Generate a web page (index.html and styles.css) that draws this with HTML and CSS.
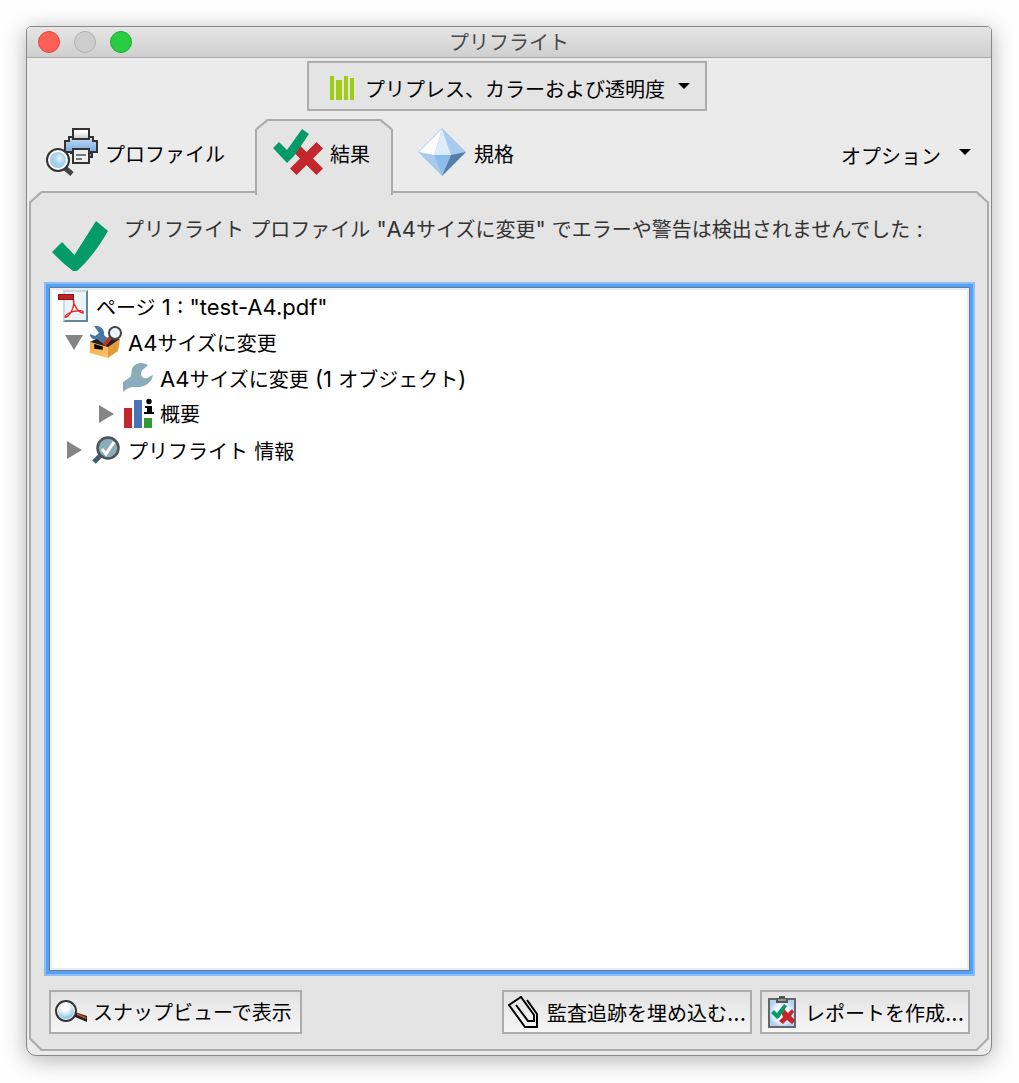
FILE: index.html
```html
<!DOCTYPE html>
<html lang="ja">
<head>
<meta charset="utf-8">
<meta name="viewport" content="width=device-width, initial-scale=1">
<title>プリフライト</title>
<link rel="stylesheet" href="styles.css">
</head>
<body>
<main class="window">
  <header class="titlebar">
    <div class="lights">
      <button class="light light-close" type="button" aria-label="閉じる"></button>
      <button class="light light-min" type="button" aria-label="しまう" disabled></button>
      <button class="light light-zoom" type="button" aria-label="拡大"></button>
    </div>
    <h1 class="title">プリフライト</h1>
  </header>

  <div class="library">
    <label class="dropdown">
      <svg class="icon" width="24" height="24" viewBox="0 0 24 24" fill="#a0cd14" aria-hidden="true"><path d="M0 0h4v24H0zM6 4h6v20H6zM14 0h4v24h-4zM20 2h4v22h-4z"/></svg>
      <select class="dropdown-select" aria-label="ライブラリ">
        <option>プリプレス、カラーおよび透明度</option>
      </select>
      <svg class="icon arrow" width="12" height="6" viewBox="0 0 12 6" aria-hidden="true"><path d="M0 0h12L6 6z"/></svg>
    </label>
  </div>

  <nav class="tabs">
    <button class="tab tab-profile" type="button">
      <svg class="icon" width="52" height="48" viewBox="0 0 52 48" aria-hidden="true">
        <defs>
          <linearGradient id="paper" x1="0" y1="0" x2="0" y2="1"><stop offset="0.3" stop-color="#fff"/><stop offset="1" stop-color="#c4c4c4"/></linearGradient>
          <linearGradient id="printer" x1="0" y1="0" x2="0" y2="1"><stop offset="0" stop-color="#c5def7"/><stop offset="1" stop-color="#74a9df"/></linearGradient>
          <radialGradient id="lens" cx="0.6" cy="0.4" r="0.6"><stop offset="0" stop-color="#eef7fc"/><stop offset="0.5" stop-color="#add7ed"/><stop offset="1" stop-color="#9accea"/></radialGradient>
        </defs>
        <path d="M24 25h22v4h-3" fill="#999" stroke="#333" stroke-width="2"/>
        <path d="M23 9h24v4h4v11H19V13h4z" fill="url(#printer)" stroke="#333" stroke-width="2"/>
        <path d="M27 1h16v10H27z" fill="url(#paper)" stroke="#333" stroke-width="2"/>
        <path d="M27 21h16v14H27z" fill="#eee" stroke="#333" stroke-width="2"/>
        <path d="M30 27h10M30 31h6" stroke="#777" stroke-width="2"/>
        <path d="M19 40l7 6" stroke="#444" stroke-width="5"/>
        <circle cx="12" cy="32" r="11" fill="#fff" stroke="#333" stroke-width="2"/>
        <circle cx="12" cy="32" r="8" fill="url(#lens)"/>
      </svg>
      <span class="tab-label">プロファイル</span>
    </button>
    <button class="tab tab-active" type="button" aria-current="page">
      <span class="tab-face">
        <svg class="icon" width="50" height="48" viewBox="0 0 50 48" aria-hidden="true">
          <path d="M23.500 14l10 10 10-10 6.500 6.500-10 10 10 10-6.500 6.500-10-10-10 10-6.500-6.500 10-10-10-10z" fill="#c1272d"/>
          <path d="M0 20l6-6 8 8L29 1l7 5-15 22q-4 4-7 7z" fill="#039b68"/>
        </svg>
        <span class="tab-label">結果</span>
      </span>
    </button>
    <button class="tab tab-standards" type="button">
      <svg class="icon" width="48" height="48" viewBox="0 0 48 48" aria-hidden="true">
        <path d="M24 0l24 24-24 24L0 24z" fill="#a9cbee"/>
        <path d="M24 1L1 24l15 3z" fill="#fff"/>
        <path d="M24 1l-8 26h17z" fill="#deecf8"/>
        <path d="M16 27h17l-9 20z" fill="#8cbce9"/>
        <path d="M48 24l-15 3-9 21z" fill="#547faa"/>
      </svg>
      <span class="tab-label">規格</span>
    </button>
    <button class="options" type="button" aria-haspopup="menu">
      <span class="tab-label">オプション</span>
      <svg class="icon arrow" width="12" height="6" viewBox="0 0 12 6" aria-hidden="true"><path d="M0 0h12L6 6z"/></svg>
    </button>
  </nav>

  <section class="panel">
    <div class="panel-body">
      <div class="status">
        <svg class="icon" width="56" height="54" viewBox="0 0 56 54" aria-hidden="true"><path d="M0 35l10-10 12.500 13L44 4l12 10q-15 26-31 40h-4q-11-8-21-19z" fill="#039b68"/></svg>
        <p class="status-text">プリフライト<span class="latin"> </span>プロファイル<span class="latin"> "A4</span>サイズに変更<span class="latin">" </span>でエラーや警告は検出されませんでした<span class="latin"> :</span></p>
      </div>

      <div class="results" tabindex="0">
        <ul class="tree">
          <li class="row">
            <svg class="icon" width="32" height="32" viewBox="0 0 32 32" aria-hidden="true">
              <path d="M5 0h25v32H5z" fill="#5f899c"/>
              <path d="M5 0h25l-2 2v28l-2 0H7l-2 2z" fill="#c3dbe6"/>
              <path d="M7 2h21v28H7z" fill="#edf4f8"/>
              <path d="M14 9c3 0 2 8-1 13-2 4-5 6-6 5 0-2 6-6 12-6 4-1 7 0 6 2-3 0-9-5-10-14" fill="none" stroke="#e8262b" stroke-width="1.300"/>
              <path d="M0 4h16v6H0z" fill="#8f1218"/><path d="M1 5h14v4H1z" fill="#bd252b"/>
            </svg>
            <span class="row-label">ページ<span class="latin"> 1 : "test-A4.pdf"</span></span>
          </li>
          <li>
            <div class="row">
              <button class="toggle" type="button" aria-expanded="true" aria-label="折りたたむ"><svg class="icon" width="18" height="15" viewBox="0 0 18 15"><path d="M0 0h18L9 15z" fill="#858585"/></svg></button>
              <svg class="icon" width="32" height="32" viewBox="0 0 32 32" aria-hidden="true">
                <defs><linearGradient id="box" x1="0" y1="0" x2="1" y2="1"><stop offset="0" stop-color="#f4ae43"/><stop offset="1" stop-color="#f8c26d"/></linearGradient></defs>
                <path d="M0 16l10-5 20 2-12 9z" fill="#26201b"/>
                <path d="M4 0c6-1 11 3 10 9l5 5-4 5-8-6c-4 1-7-1-7-5l5 2 4-3z" fill="#4878a8"/>
                <path d="M14 19l8-9" stroke="#b9382c" stroke-width="4"/>
                <path d="M0 16l18 5v11L0 27z" fill="url(#box)"/>
                <path d="M18 21l12-8-2 12-10 7z" fill="#e39a3a"/>
                <path d="M5 19l7 2v2l-7-1z" fill="#000" stroke="#000" stroke-width="1.500"/>
                <circle cx="25" cy="7" r="6" fill="#eef5fa" stroke="#444" stroke-width="2"/>
              </svg>
              <span class="row-label"><span class="latin">A4</span>サイズに変更</span>
            </div>
            <ul class="tree branch">
              <li class="row leaf">
                <svg class="icon" width="32" height="32" viewBox="0 0 32 32" aria-hidden="true"><path d="M26 3C20-1 12 1 10 7c-1 5 0 7-3 9l-6 4v10c6-5 9-5 12-5 9 1 17-4 18-12l-6 3c-3 1-6-1-6-4s2-5 4-6z" fill="#8aacbb"/></svg>
                <span class="row-label"><span class="latin">A4</span>サイズに変更<span class="latin"> (1 </span>オブジェクト<span class="latin">)</span></span>
              </li>
              <li class="row">
                <button class="toggle" type="button" aria-expanded="false" aria-label="展開"><svg class="icon" width="15" height="18" viewBox="0 0 15 18"><path d="M0 0v18l15-9z" fill="#858585"/></svg></button>
                <svg class="icon" width="32" height="32" viewBox="0 0 32 32" aria-hidden="true">
                  <path d="M2 10h8v20H2z" fill="#c1272d"/><path d="M12 2h8v28h-8z" fill="#4a72b5"/><path d="M22 20h8v10h-8z" fill="#339933"/>
                  <path d="M23 8h7v6h2v2H22v-2h3v-4h-2z"/><circle cx="27" cy="3.500" r="2.700"/>
                </svg>
                <span class="row-label">概要</span>
              </li>
            </ul>
          </li>
          <li class="row">
            <button class="toggle" type="button" aria-expanded="false" aria-label="展開"><svg class="icon" width="15" height="18" viewBox="0 0 15 18"><path d="M0 0v18l15-9z" fill="#858585"/></svg></button>
            <svg class="icon" width="32" height="32" viewBox="0 0 32 32" aria-hidden="true">
              <path d="M11 21l-7 7" stroke="#3f5d6e" stroke-width="5"/>
              <circle cx="18" cy="14" r="10.500" fill="#8aacbb" stroke="#4a5459" stroke-width="2.500"/>
              <path d="M12 15l4 5 8-12" fill="none" stroke="#fff" stroke-width="3"/>
            </svg>
            <span class="row-label">プリフライト<span class="latin"> </span>情報</span>
          </li>
        </ul>
      </div>

      <footer class="actions">
        <button class="action action-snap" type="button">
          <svg class="icon" width="32" height="32" viewBox="0 0 32 32" aria-hidden="true">
            <defs><radialGradient id="glass" cx="0.450" cy="0.300" r="0.700"><stop offset="0.300" stop-color="#fff"/><stop offset="1" stop-color="#7fc0e4"/></radialGradient></defs>
            <path d="M20 16l12 4v6l-12-5z" fill="#222"/><path d="M22 17l9 4v2l-9-4z" fill="#d2492a"/>
            <circle cx="11" cy="15" r="10" fill="#fff" stroke="#333" stroke-width="2"/><circle cx="11" cy="15" r="8" fill="url(#glass)"/>
          </svg>
          <span class="action-label">スナップビューで表示</span>
        </button>
        <button class="action action-embed" type="button">
          <svg class="icon" width="32" height="32" viewBox="0 0 32 32" aria-hidden="true"><path d="M19 4l10 14v13H17L1 9l12-8 13 18v6h-6L8 9" fill="none" stroke="#000" stroke-width="2"/></svg>
          <span class="action-label">監査追跡を埋め込む<span class="latin">...</span></span>
        </button>
        <button class="action action-report" type="button">
          <svg class="icon" width="28" height="32" viewBox="0 0 28 32" aria-hidden="true">
            <defs><radialGradient id="board"><stop offset="0.500" stop-color="#fff"/><stop offset="1" stop-color="#b4d2f5"/></radialGradient></defs>
            <path d="M1 3h26v28H1z" fill="url(#board)" stroke="#666" stroke-width="2"/>
            <path d="M13 16l3-3 4 4 4-4 2 3-3 4 3 3v3l-2 2-5-4-4 4-4-3 4-4z" fill="#c1272d"/>
            <path d="M3 17l3-3 3 3 7-9 3 2-8 12-2 1z" fill="#039b68"/>
            <path d="M8 2h3V0h6v2h3v5H8z" fill="#555"/><path d="M10 3h8v2h-8z" fill="#999"/>
          </svg>
          <span class="action-label">レポートを作成<span class="latin">...</span></span>
        </button>
      </footer>
    </div>
  </section>
</main>
</body>
</html>
```
FILE: styles.css
```css
* {
  box-sizing: border-box;
}

:root {
  --line: #acacac;
  --face: #ebebeb;
  --panel: #e4e4e4;
}

body {
  margin: 0;
  min-height: 100vh;
  display: flex;
  padding: 26px 27px 27px 26px;
  background: #fefefe;
  color: #000;
  font: 20px/24px Inter, "Noto Sans CJK JP", sans-serif;
}

button,
select {
  margin: 0;
  padding: 0;
  border: 0;
  background: none;
  color: inherit;
  font: inherit;
}

/* Latin runs are set slightly larger to balance with the kana */
.latin {
  font-size: 22px;
}

.icon {
  display: block;
  flex: none;
}

.window {
  flex: 1;
  min-width: 0;
  display: flex;
  flex-direction: column;
  border: 1px solid #888;
  border-radius: 5px 5px 10px 10px;
  background: var(--face);
  box-shadow: 0 4px 22px rgba(0, 0, 0, 0.3);
}

/* Title bar */
.titlebar {
  display: grid;
  grid-template-columns: 1fr auto 1fr;
  align-items: center;
  height: 31px;
  padding: 0 11px;
  border-bottom: 1px solid #a8a8a8;
  border-radius: 4px 4px 0 0;
  background: linear-gradient(#e5e5e5, #cfcfcf);
}

.lights {
  display: flex;
  gap: 14px;
}

.light {
  width: 22px;
  height: 22px;
  border: 1px solid #e2463f;
  border-radius: 50%;
  background: #ff5f57;
}

.light-min {
  border-color: #b0b0b0;
  background: #cecece;
}

.light-zoom {
  border-color: #1dad2b;
  background: #28cd41;
}

.title {
  margin: 0;
  padding-top: 2px;
  color: #4a4a4a;
  font-size: 20px;
  font-weight: 400;
}

/* Library drop-down */
.library {
  display: flex;
  justify-content: center;
  padding: 3px 4px 8px 0;
}

.dropdown {
  display: flex;
  align-items: center;
  width: 400px;
  height: 50px;
  padding: 4px 15px 0 21px;
  border: 2px solid var(--line);
  background: var(--panel);
}

.dropdown-select {
  flex: 1;
  margin-left: 11px;
  padding-top: 4px;
  appearance: none;
}

.arrow {
  margin-bottom: 4px;
}

/* Tabs */
.tabs {
  position: relative;
  z-index: 1;
  display: flex;
  height: 76px;
  margin-bottom: -4px;
}

.tab {
  display: flex;
  align-items: center;
  gap: 7px;
  padding-bottom: 10px;
}

.tab-label {
  padding-top: 6px;
}

.tab-profile {
  width: 228px;
  padding-left: 19px;
}

.tab-active {
  padding: 2px 2px 0;
  background: var(--line);
  clip-path: polygon(0 10px, 12px 0, calc(100% - 12px) 0, 100% 10px, 100% 100%, 0 100%);
}

.tab-face {
  display: flex;
  align-items: center;
  gap: 7px;
  height: 100%;
  padding: 0 21px 12px 16px;
  background: var(--panel);
  clip-path: polygon(0 9px, 11px 0, calc(100% - 11px) 0, 100% 9px, 100% 100%, 0 100%);
}

.tab-standards {
  gap: 8px;
  padding-left: 25px;
}

.options {
  display: flex;
  align-items: center;
  gap: 18px;
  margin-left: auto;
  padding: 0 20px 6px 0;
}

/* Panel */
.panel {
  flex: 1;
  display: flex;
  margin: 0 2px 4px;
  padding: 2px;
  background: var(--line);
  clip-path: polygon(0 11px, 12px 0, calc(100% - 12px) 0, 100% 11px, 100% calc(100% - 12px), calc(100% - 12px) 100%, 12px 100%, 0 calc(100% - 12px));
}

.panel-body {
  flex: 1;
  min-width: 0;
  display: flex;
  flex-direction: column;
  padding: 24px 17px 15px 18px;
  background: var(--panel);
  clip-path: polygon(0 10px, 11px 0, calc(100% - 11px) 0, 100% 10px, 100% calc(100% - 11px), calc(100% - 11px) 100%, 11px 100%, 0 calc(100% - 11px));
}

.status {
  display: flex;
  align-items: flex-start;
  gap: 16px;
  padding: 0 0 16px 3px;
}

.status-text {
  margin: 0;
  color: #333;
}

.results {
  flex: 1;
  border: 1px solid #6f7880;
  outline: none;
  background: #fff;
  box-shadow: inset 0 0 0 2px #ececec, 0 0 0 3px #4da3ff, 0 0 0 5px #8fbcf5;
}

.tree {
  margin: 0;
  padding: 0 0 0 8px;
  list-style: none;
}

.branch {
  padding-left: 32px;
}

.row {
  display: flex;
  align-items: center;
  height: 36px;
}

.row-label {
  margin-left: 6px;
  padding-top: 2px;
}

.leaf {
  padding-left: 32px;
}

.toggle {
  display: flex;
  justify-content: center;
  width: 32px;
}

/* Footer buttons */
.actions {
  display: flex;
  gap: 8px;
  margin-top: 19px;
}

.action {
  display: flex;
  align-items: center;
  gap: 7px;
  height: 44px;
  padding: 0 4px;
  border: 2px solid var(--line);
  background: linear-gradient(#e2e2e2, #f6f6f6);
}

.action-label {
  padding-top: 2px;
}

.action-snap {
  gap: 6px;
  margin-right: auto;
  padding-right: 8px;
}

.action-report {
  gap: 9px;
  padding-left: 6px;
}
```
